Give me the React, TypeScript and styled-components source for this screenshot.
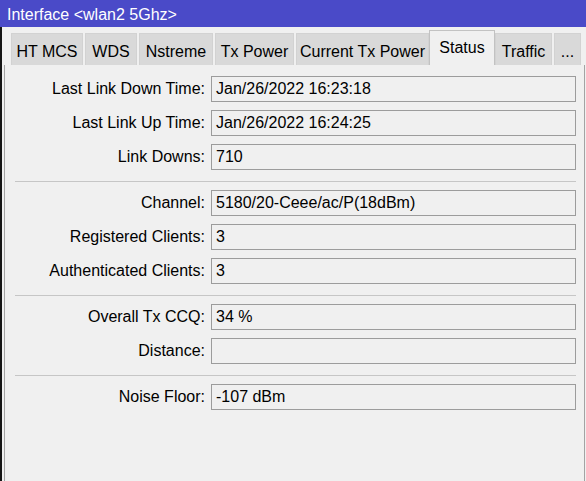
import styled, { createGlobalStyle } from "styled-components";

const GlobalStyle = createGlobalStyle`
  html, body {
    margin: 0;
    padding: 0;
    background: #f0f0f0;
  }

  body {
    font-family: "Liberation Sans", Arial, sans-serif;
    font-size: 16px;
    color: #000;
  }
`;

interface TabDef {
  label: string;
  width: number;
  active?: boolean;
}

const tabs: TabDef[] = [
  { label: "HT MCS", width: 72 },
  { label: "WDS", width: 52 },
  { label: "Nstreme", width: 74 },
  { label: "Tx Power", width: 79 },
  { label: "Current Tx Power", width: 133 },
  { label: "Status", width: 66, active: true },
  { label: "Traffic", width: 57 },
  { label: "...", width: 27 },
];

type Field = { label: string; value: string };

// groups are split by a thin rule
const groups: Field[][] = [
  [
    { label: "Last Link Down Time:", value: "Jan/26/2022 16:23:18" },
    { label: "Last Link Up Time:", value: "Jan/26/2022 16:24:25" },
    { label: "Link Downs:", value: "710" },
  ],
  [
    { label: "Channel:", value: "5180/20-Ceee/ac/P(18dBm)" },
    { label: "Registered Clients:", value: "3" },
    { label: "Authenticated Clients:", value: "3" },
  ],
  [
    { label: "Overall Tx CCQ:", value: "34 %" },
    { label: "Distance:", value: "" },
  ],
  [{ label: "Noise Floor:", value: "-107 dBm" }],
];

export default function App() {
  return (
    <>
      <GlobalStyle />
      <Window>
        <TitleBar>Interface &lt;wlan2 5Ghz&gt;</TitleBar>
        <WindowBody>
          <TabStrip>
            {tabs.map((t) => (
              <Tab key={t.label} $active={!!t.active} $w={t.width}>
                {t.label}
              </Tab>
            ))}
          </TabStrip>
          <TabPanel>
            {groups.map((group, gi) => (
              <Group key={gi}>
                {gi > 0 && <Rule />}
                {group.map((f) => (
                  <FieldRow key={f.label}>
                    <FieldLabel>{f.label}</FieldLabel>
                    <FieldBox>{f.value}</FieldBox>
                  </FieldRow>
                ))}
              </Group>
            ))}
          </TabPanel>
        </WindowBody>
      </Window>
    </>
  );
}

const Window = styled.div`
  display: flex;
  flex-direction: column;
  width: 586px;
  height: 481px;
  overflow: hidden;
`;

const TitleBar = styled.div`
  height: 27px;
  line-height: 29px;
  padding-left: 7px;
  background: #4a4ac8;
  color: #fff;
  white-space: nowrap;
`;

const WindowBody = styled.div`
  flex: 1;
  display: flex;
  flex-direction: column;
  border-left: 2px solid #151515;
  background: #f0f0f0;
`;

const TabStrip = styled.div`
  display: flex;
  align-items: flex-end;
  gap: 2px;
  height: 38px;
  padding-left: 9px;
  box-sizing: border-box;
`;

const Tab = styled.div<{ $active: boolean; $w: number }>`
  box-sizing: border-box;
  width: ${(p) => p.$w}px;
  height: ${(p) => (p.$active ? 35 : 32)}px;
  line-height: ${(p) => (p.$active ? 33 : 35)}px;
  text-align: center;
  white-space: nowrap;
  background: ${(p) => (p.$active ? "#f0f0f0" : "#d9d9d9")};
  border: 1px solid ${(p) => (p.$active ? "#c2c2c2" : "#d2d2d2")};
  border-bottom: none;
  ${(p) => (p.$active ? "margin: 0 -2px; position: relative;" : "")}
`;

const TabPanel = styled.div`
  flex: 1;
  display: flex;
  flex-direction: column;
  gap: 8px;
  margin: 0 1px 0 2px;
  padding: 11px 8px 0 10px;
  border-left: 1px solid #a3a3a3;
  border-right: 1px solid #a3a3a3;
  background: #f0f0f0;
`;

const Group = styled.div`
  display: contents;
`;

const Rule = styled.div`
  margin-top: 3px;
  height: 1px;
  background: #c6c6c6;
`;

const FieldRow = styled.div`
  display: grid;
  grid-template-columns: 190px 1fr;
  column-gap: 6px;
  align-items: center;
`;

const FieldLabel = styled.div`
  text-align: right;
  white-space: nowrap;
`;

const FieldBox = styled.div`
  box-sizing: border-box;
  height: 26px;
  line-height: 24px;
  padding-left: 4px;
  border: 1px solid #9c9c9c;
  background: #f0f0f0;
  white-space: nowrap;
  overflow: hidden;
`;
